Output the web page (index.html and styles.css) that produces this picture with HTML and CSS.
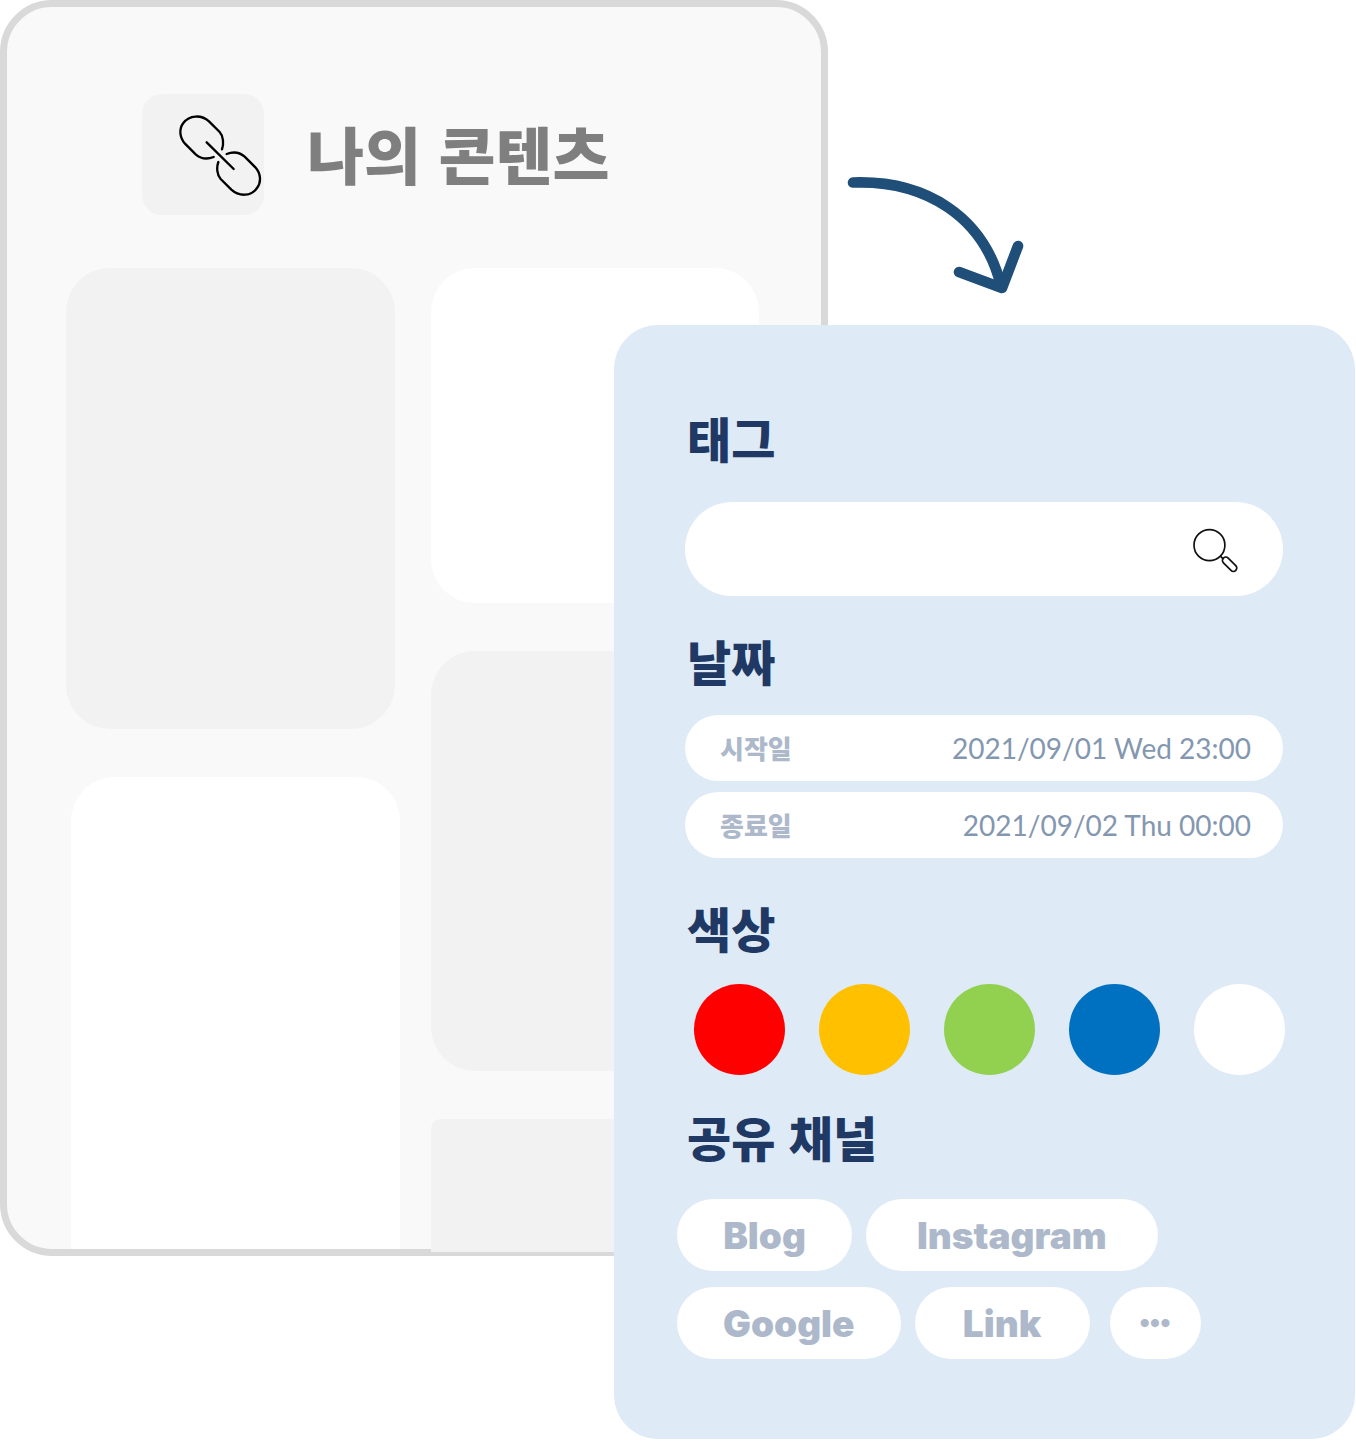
FILE: index.html
```html
<!DOCTYPE html>
<html lang="ko">
<head>
<meta charset="utf-8">
<meta name="viewport" content="width=device-width, initial-scale=1">
<title>나의 콘텐츠</title>
<link rel="stylesheet" href="styles.css">
</head>
<body>
<div class="stage">
  <main class="board">
    <header class="board-header">
      <div class="board-icon">
        <svg class="link-icon" viewBox="24 24 252 252" aria-hidden="true">
          <path d="M131 156 C113 163 92 161 77 148 L45 116 C29 98 26 72 40 54 C58 30 94 28 117 49 L149 81 C160 93 162 116 156 133"/>
          <path d="M170 147 C188 140 209 142 224 155 L256 187 C272 205 275 231 261 249 C243 275 207 275 184 254 L152 222 C141 210 139 188 145 171"/>
          <path d="M110 112 L191 192"/>
        </svg>
      </div>
      <h1 class="board-title">나의 콘텐츠</h1>
    </header>
    <div class="board-columns">
      <div class="board-column">
        <div class="tile tile-tall"></div>
        <div class="tile tile-light tile-shifted tile-rest"></div>
      </div>
      <div class="board-column">
        <div class="tile tile-light tile-short"></div>
        <div class="tile tile-medium"></div>
        <div class="tile tile-last"></div>
      </div>
    </div>
  </main>

  <svg class="arrow" viewBox="842 172 190 130" aria-hidden="true">
    <path d="M853 182.500 C925 180 984 216 1001 286"/>
    <path d="M959 272 L1002 288 L1018 246"/>
  </svg>

  <form class="filter">
    <section class="group group-tag">
      <h2 class="group-title"><label for="tag">태그</label></h2>
      <div class="search">
        <input class="search-input" id="tag" type="text">
        <button class="search-button" type="button" aria-label="검색">
          <svg class="search-icon" viewBox="36 33 140 140" aria-hidden="true">
            <circle cx="88" cy="90" r="46"/>
            <path d="M120 122 L128 130"/>
            <rect x="122" y="137" width="52" height="20" rx="10" transform="rotate(45 148 147)"/>
          </svg>
        </button>
      </div>
    </section>

    <section class="group group-date">
      <h2 class="group-title">날짜</h2>
      <div class="date-list">
        <div class="date-row">
          <label class="date-label" for="start">시작일</label>
          <input class="date-input" id="start" type="text" value="2021/09/01 Wed 23:00">
        </div>
        <div class="date-row">
          <label class="date-label" for="end">종료일</label>
          <input class="date-input" id="end" type="text" value="2021/09/02 Thu 00:00">
        </div>
      </div>
    </section>

    <section class="group group-color">
      <h2 class="group-title">색상</h2>
      <div class="swatches">
        <input class="swatch swatch-red" type="radio" name="color" aria-label="빨강">
        <input class="swatch swatch-yellow" type="radio" name="color" aria-label="노랑">
        <input class="swatch swatch-green" type="radio" name="color" aria-label="초록">
        <input class="swatch swatch-blue" type="radio" name="color" aria-label="파랑">
        <input class="swatch swatch-white" type="radio" name="color" aria-label="하양">
      </div>
    </section>

    <section class="group group-channel">
      <h2 class="group-title">공유 채널</h2>
      <div class="chips">
        <button class="chip" type="button">Blog</button>
        <button class="chip chip-wide" type="button">Instagram</button>
        <button class="chip" type="button">Google</button>
        <button class="chip" type="button">Link</button>
        <button class="chip chip-more" type="button" aria-label="더 보기">•••</button>
      </div>
    </section>
  </form>
</div>
</body>
</html>
```
FILE: styles.css
```css
* {
  box-sizing: border-box;
}

body {
  margin: 0;
  background: #fff;
  font-family: "Noto Sans CJK KR", sans-serif;
}

h1,
h2 {
  margin: 0;
  font-weight: 900;
}

/* The filter panel shares the middle column and row with the board. */
.stage {
  display: grid;
  grid-template-columns: 614fr 214fr 527fr;
  grid-template-rows: 325px 931px auto;
  padding-right: 1px;
}

.board {
  grid-column: 1 / 3;
  grid-row: 1 / 3;
  display: flex;
  flex-direction: column;
  padding: 87px 62px 0 59px;
  border: 7px solid #d9d9d9;
  border-radius: 52px;
  background: #f9f9f9;
}

.board-header {
  display: flex;
  align-items: center;
  gap: 43px;
  padding-left: 76px;
}

.board-icon {
  display: flex;
  align-items: center;
  justify-content: flex-end;
  width: 122px;
  height: 121px;
  padding-right: 2px;
  border-radius: 20px;
  background: #f2f2f2;
}

.link-icon {
  width: 84px;
  height: 84px;
  fill: none;
  stroke: #000;
  stroke-width: 7;
  stroke-linecap: round;
}

.board-title {
  padding-bottom: 4px;
  color: #7f7f7f;
  font-size: 62px;
  line-height: 80px;
  white-space: nowrap;
}

.board-columns {
  flex: 1;
  display: grid;
  grid-template-columns: 334fr 328fr;
  column-gap: 31px;
  margin-top: 53px;
}

.board-column {
  display: flex;
  flex-direction: column;
  gap: 48px;
}

.tile {
  border-radius: 44px;
  background: #f2f2f2;
}

.tile-light {
  background: #fff;
}

.tile-tall {
  height: 461px;
  margin-right: 5px;
}

.tile-shifted {
  margin-left: 5px;
}

.tile-rest {
  flex: 1;
  border-radius: 44px 44px 0 0;
}

.tile-short {
  height: 335px;
}

.tile-medium {
  height: 420px;
}

.tile-last {
  flex: 1;
  margin-bottom: -3px;
  border-radius: 10px 10px 0 0;
}

.arrow {
  grid-column: 3;
  grid-row: 1;
  width: 190px;
  height: 130px;
  margin: 172px 0 0 14px;
  fill: none;
  stroke: #1f4e79;
  stroke-width: 10.600;
  stroke-linecap: round;
  stroke-linejoin: round;
}

.filter {
  grid-column: 2 / 4;
  grid-row: 2 / 4;
  padding: 84px 72px 80px 71px;
  border-radius: 44px;
  background: #deeaf6;
}

.group {
  display: flex;
  flex-direction: column;
}

.group-tag {
  gap: 37px;
}

.group-date {
  gap: 27px;
  margin-top: 36px;
}

.group-color {
  gap: 29px;
  margin-top: 41px;
}

.group-channel {
  gap: 35px;
  margin-top: 33px;
}

.group-title {
  padding-left: 2px;
  color: #203864;
  font-size: 48px;
  line-height: 56px;
}

.search {
  display: flex;
  align-items: center;
  height: 94px;
  padding: 0 44px;
  border-radius: 47px;
  background: #fff;
}

.search-input {
  flex: 1;
  min-width: 0;
  border: 0;
  outline: 0;
  background: none;
  color: #203864;
  font: 400 28px Lato, sans-serif;
}

.search-button {
  display: flex;
  padding: 0;
  border: 0;
  background: none;
}

.search-icon {
  width: 47px;
  height: 47px;
  fill: none;
  stroke: #111;
  stroke-width: 5;
}

.date-list {
  display: flex;
  flex-direction: column;
  gap: 11px;
}

.date-row {
  display: flex;
  align-items: center;
  height: 66px;
  padding: 0 32px 0 35px;
  border-radius: 33px;
  background: #fff;
}

.date-label {
  color: #adb9ca;
  font-size: 26px;
  font-weight: 900;
  line-height: 32px;
}

.date-input {
  flex: 1;
  min-width: 0;
  padding: 0;
  border: 0;
  outline: 0;
  background: none;
  color: #8497b0;
  font: 400 28px Lato, sans-serif;
  text-align: right;
}

.swatches {
  display: flex;
  justify-content: space-between;
  margin: 0 -2px 0 9px;
}

.swatch {
  width: 91px;
  height: 91px;
  margin: 0;
  border-radius: 50%;
  appearance: none;
}

.swatch-red {
  background: #f00;
}

.swatch-yellow {
  background: #ffc000;
}

.swatch-green {
  background: #92d050;
}

.swatch-blue {
  background: #0070c0;
}

.swatch-white {
  background: #fff;
}

.chips {
  display: flex;
  flex-wrap: wrap;
  gap: 16px 14px;
  margin-left: -8px;
}

.chip {
  min-width: 175px;
  height: 72px;
  padding: 0 46px;
  border: 0;
  border-radius: 36px;
  background: #fff;
  color: #adb9ca;
  font: 900 37px Inter, sans-serif;
}

.chip-wide {
  padding: 0 51px;
}

.chip-more {
  min-width: 91px;
  margin-left: 6px;
  padding: 0 0 4px;
  font-size: 26px;
}
```
